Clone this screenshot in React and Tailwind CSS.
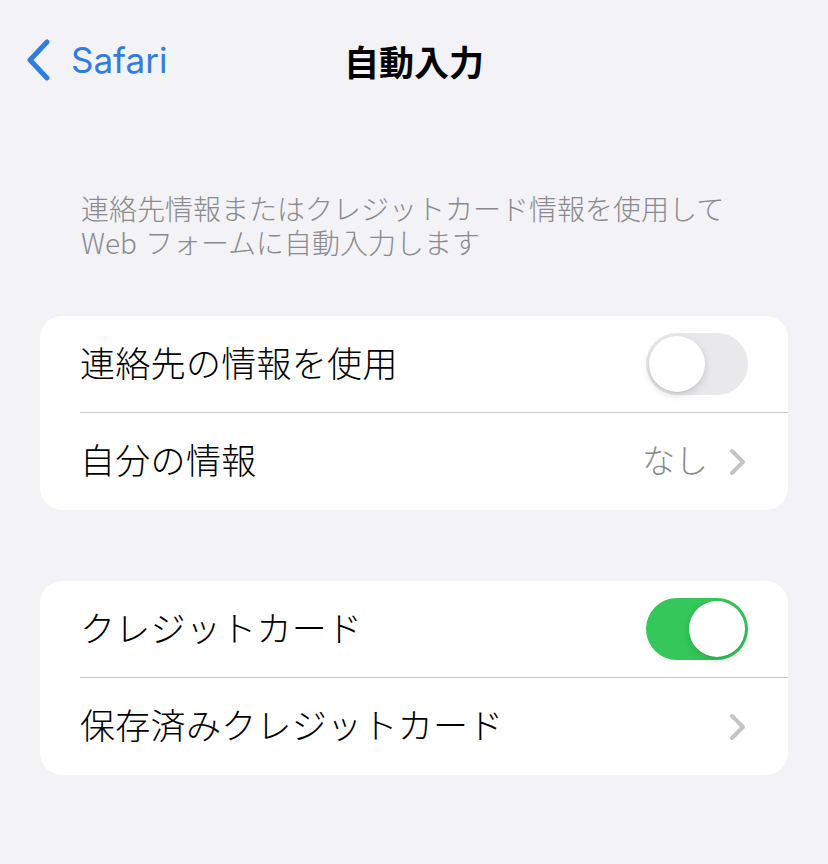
import React from 'react';

const font = { fontFamily: '"Noto Sans CJK JP", "Noto Sans", sans-serif' };

const Toggle = ({ on }) => (
    <div
        className={`flex h-[62px] w-[102px] items-center rounded-full p-[3px] ${
            on ? 'justify-end bg-[#34c759]' : 'justify-start bg-[#e9e9eb]'
        }`}
    >
        <div className="h-[56px] w-[56px] rounded-full bg-white shadow-[0_3px_8px_rgba(0,0,0,0.15),0_1px_1px_rgba(0,0,0,0.06)]" />
    </div>
);

const Chevron = () => (
    <svg width="20" height="28" viewBox="0 0 20 28" fill="none">
        <path
            d="M4 3 L15 14 L4 25"
            stroke="#c4c4c7"
            strokeWidth="4"
            strokeLinecap="round"
            strokeLinejoin="round"
        />
    </svg>
);

const Row = ({ label, children, last }) => (
    <div className="flex h-[97px] items-stretch pl-[40px]">
        <div
            className={`flex flex-1 items-center justify-between pr-[40px] ${
                last ? '' : 'border-b border-[#c6c6c8]'
            }`}
        >
            <span className="mb-[6px] text-[35px] font-light leading-none tracking-[0.3px] text-black">
                {label}
            </span>
            {children}
        </div>
    </div>
);

export default function App() {
    return (
        <div className="h-[864px] w-[828px] overflow-hidden bg-[#f2f2f7]" style={font}>
            {/* Nav bar */}
            <div className="grid h-[120px] grid-cols-[1fr_auto_1fr] items-center">
                <div className="flex items-center gap-[18px] pl-[25px]">
                    <svg width="28" height="42" viewBox="0 0 28 42" fill="none">
                        <path
                            d="M22 3 L5 21 L22 39"
                            stroke="#2f7de1"
                            strokeWidth="5"
                            strokeLinecap="round"
                            strokeLinejoin="round"
                        />
                    </svg>
                    <span
                        className="text-[35px] leading-none text-[#2f7de1]"
                        style={{ fontFamily: 'Inter, "Noto Sans", sans-serif' }}
                    >
                        Safari
                    </span>
                </div>
                <div className="text-[35px] font-bold leading-none text-black">自動入力</div>
                <div />
            </div>

            {/* Description */}
            <p className="mt-[71px] pl-[81px] pr-[30px] text-[28px] font-light leading-[34px] text-[#8a8a8e]">
                連絡先情報またはクレジットカード情報を使用して
                <br />
                Web<span className="ml-[8px]">フォームに自動入力します</span>
            </p>

            {/* Card 1 */}
            <div className="mx-[40px] mt-[57px] overflow-hidden rounded-[22px] bg-white">
                <Row label="連絡先の情報を使用">
                    <Toggle on={false} />
                </Row>
                <Row label="自分の情報" last>
                    <div className="flex items-center gap-[20px]">
                        <span className="mb-[4px] text-[33px] font-light leading-none text-[#8a8a8e]">なし</span>
                        <Chevron />
                    </div>
                </Row>
            </div>

            {/* Card 2 */}
            <div className="mx-[40px] mt-[71px] overflow-hidden rounded-[22px] bg-white">
                <Row label="クレジットカード">
                    <Toggle on />
                </Row>
                <Row label="保存済みクレジットカード" last>
                    <Chevron />
                </Row>
            </div>
        </div>
    );
}
